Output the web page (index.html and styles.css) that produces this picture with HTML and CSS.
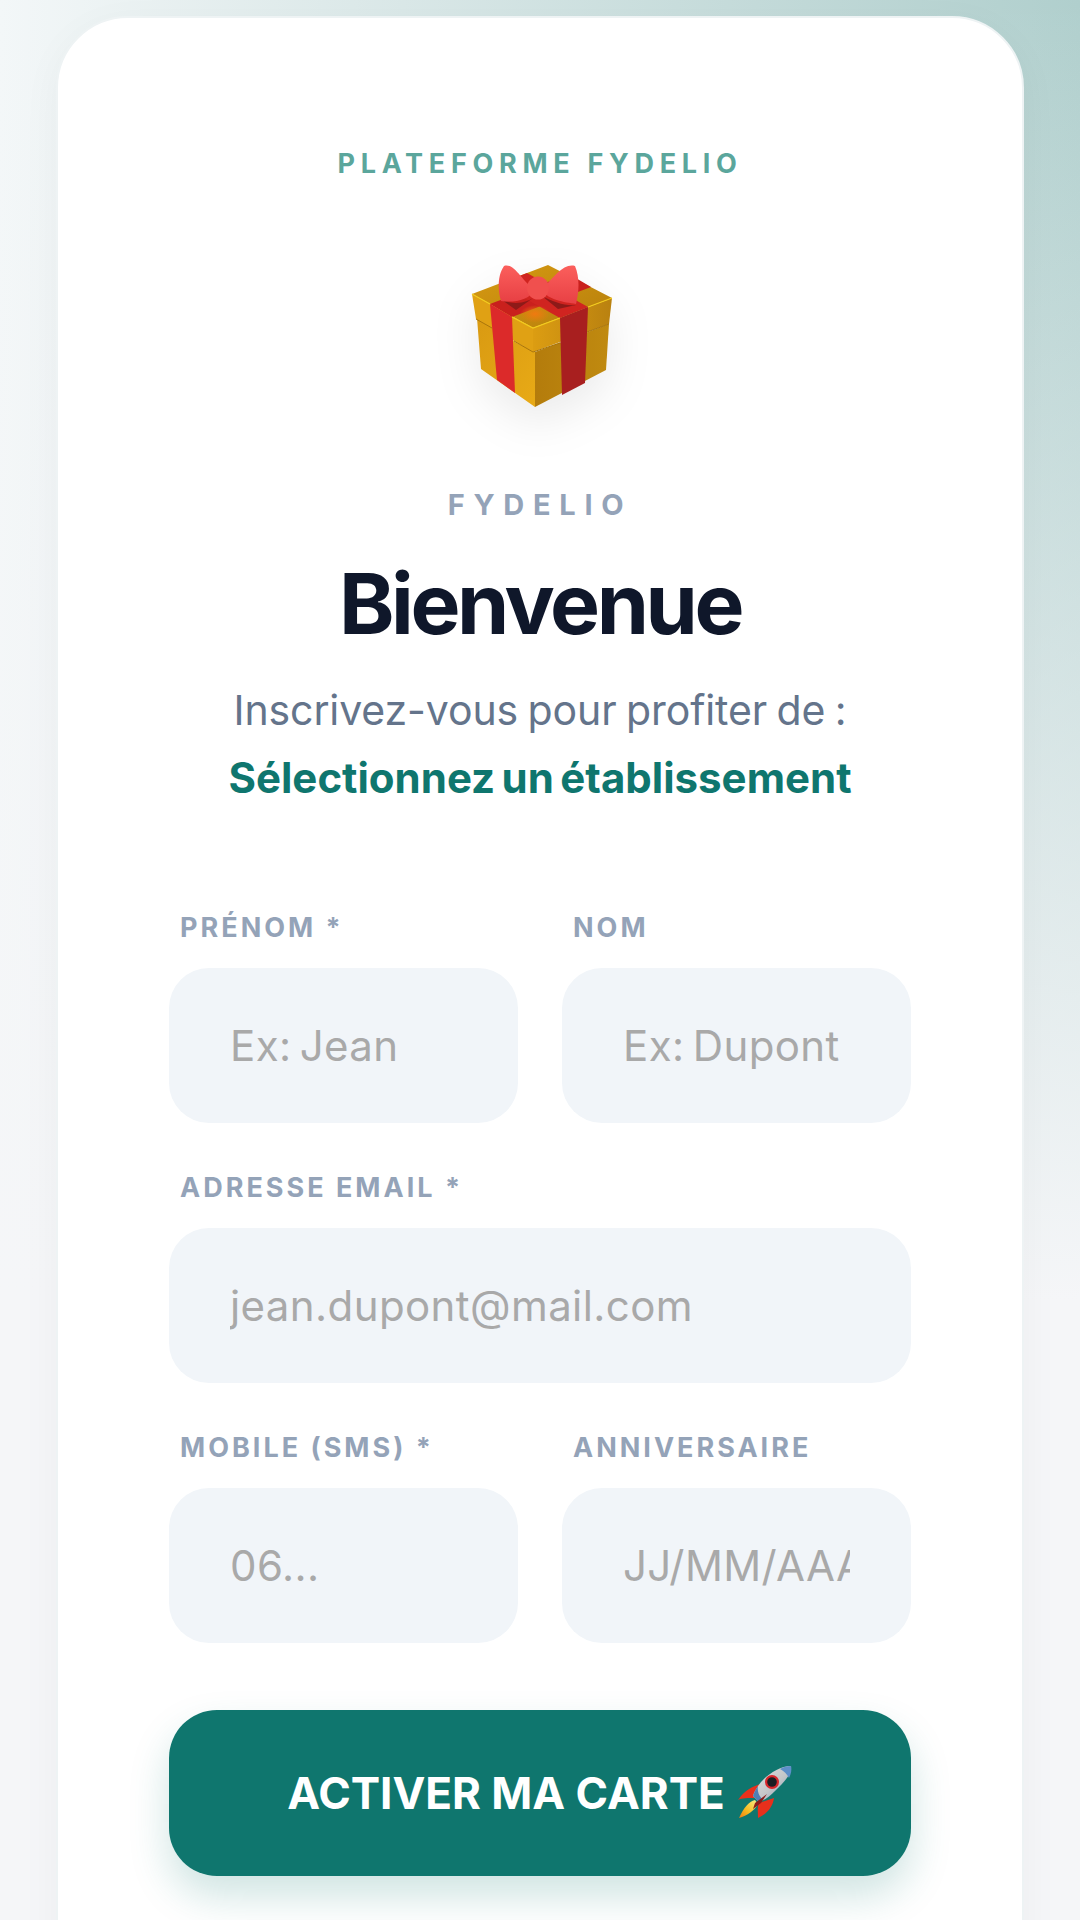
FILE: index.html
```html
<!DOCTYPE html>
<html lang="fr">
<head>
    <meta charset="UTF-8">
    <meta name="viewport" content="width=device-width, initial-scale=1.0">
    <title>Fydelio - Bienvenue</title>
    <link rel="stylesheet" href="styles.css">
</head>
<body>
    <div class="card">
        <p class="platform">PLATEFORME FYDELIO</p>
        <div class="giftWrap">
            <svg class="gift" viewBox="0 0 200 200" width="200" height="200" aria-hidden="true">
                <defs>
                    <linearGradient id="goldLeft" x1="0" y1="0" x2="1" y2="1">
                        <stop offset="0" stop-color="#d99a12"/>
                        <stop offset="1" stop-color="#e8aa16"/>
                    </linearGradient>
                    <linearGradient id="goldRight" x1="0" y1="0" x2="1" y2="0">
                        <stop offset="0" stop-color="#b47c0c"/>
                        <stop offset="1" stop-color="#c08a10"/>
                    </linearGradient>
                    <linearGradient id="lidRight" x1="0" y1="0" x2="1" y2="0">
                        <stop offset="0" stop-color="#dc9d12"/>
                        <stop offset="1" stop-color="#b98110"/>
                    </linearGradient>
                    <linearGradient id="lidTop" x1="0" y1="0" x2="1" y2="1">
                        <stop offset="0" stop-color="#d79a12"/>
                        <stop offset="1" stop-color="#b67f0c"/>
                    </linearGradient>
                    <radialGradient id="glow" cx="0.5" cy="0.5" r="0.5">
                        <stop offset="0" stop-color="#f07a10"/>
                        <stop offset="1" stop-color="#f07a10" stop-opacity="0"/>
                    </radialGradient>
                    <linearGradient id="bowFill" x1="0" y1="0" x2="0" y2="1">
                        <stop offset="0" stop-color="#fb5f5c"/>
                        <stop offset="1" stop-color="#e84044"/>
                    </linearGradient>
                </defs>
                <!-- box body -->
                <path d="M37 78 L75 102 L95 112 L95 167 L41 129 Z" fill="url(#goldLeft)"/>
                <path d="M95 112 L169 84 L166 130 L95 167 Z" fill="url(#goldRight)"/>
                <!-- lid -->
                <path d="M32 54 L108 25 L172 58 L93 88 Z" fill="url(#lidTop)"/>
                <path d="M32 54 L93 88 L93 112 L36 79 Z" fill="#e0a114"/>
                <path d="M93 88 L172 58 L169 84 L93 112 Z" fill="url(#lidRight)"/>
                <!-- ribbon -->
                <path d="M50 64 L72 77 L151 47 L129 34 Z" fill="#c9201d"/>
                <path d="M120 78 L148 67 L87 33 L59 44 Z" fill="#d02420"/>
                <path d="M50 64 L72 77 L75 153 L57 140 Z" fill="#dc2a2a"/>
                <path d="M120 78 L148 67 L145 143 L122 155 Z" fill="#a81f1f"/>
                <ellipse cx="95" cy="74" rx="15" ry="9" fill="url(#glow)"/>
                <path d="M32 54 L50 64 M72 77 L93 88 L120 78 M148 67 L172 58" fill="none" stroke="#f3cc1c" stroke-width="1.2"/>
                <path d="M36 79 L52 88 M74 101 L93 112 L120 103 M147 92 L169 84" fill="none" stroke="#a9750c" stroke-width="1"/>
                <!-- bow -->
                <path d="M62 60 C76 66 88 62 96 56 L76 70 Z M102 56 C114 62 124 66 136 65 L118 69 Z" fill="#8e1a18"/>
                <path d="M94 50 C80 38 74 23 64 26 C57 36 58 52 61 61 C74 63 90 60 94 50 Z" fill="url(#bowFill)"/>
                <path d="M102 50 C114 36 124 23 135 26 C140 38 139 52 136 64 C124 62 108 60 102 50 Z" fill="url(#bowFill)"/>
                <ellipse cx="98" cy="48" rx="11" ry="11.5" fill="#f0504e"/>
            </svg>
        </div>
        <p class="brand">FYDELIO</p>
        <h1>Bienvenue</h1>
        <p class="intro">Inscrivez-vous pour profiter de :</p>
        <p class="venue">Sélectionnez un établissement</p>

        <form class="form">
            <div class="field">
                <label for="prenom">PRÉNOM *</label>
                <input type="text" id="prenom" placeholder="Ex: Jean">
            </div>
            <div class="field">
                <label for="nom">NOM</label>
                <input type="text" id="nom" placeholder="Ex: Dupont">
            </div>
            <div class="field wide">
                <label for="email">ADRESSE EMAIL *</label>
                <input type="text" id="email" placeholder="jean.dupont@mail.com">
            </div>
            <div class="field">
                <label for="mobile">MOBILE (SMS) *</label>
                <input type="text" id="mobile" placeholder="06...">
            </div>
            <div class="field">
                <label for="birthday">ANNIVERSAIRE</label>
                <input type="text" id="birthday" placeholder="JJ/MM/AAAA">
            </div>
            <button type="button" class="submit">
                <span>ACTIVER MA CARTE</span>
                <svg class="rocket" viewBox="0 0 56 56" width="56" height="56" aria-hidden="true">
                    <defs>
                        <linearGradient id="hull" x1="0" y1="0" x2="1" y2="1">
                            <stop offset="0" stop-color="#e2e2e2"/>
                            <stop offset="0.55" stop-color="#c4c6c8"/>
                            <stop offset="1" stop-color="#6f8fb8"/>
                        </linearGradient>
                        <linearGradient id="flame" x1="1" y1="0" x2="0" y2="1">
                            <stop offset="0" stop-color="#f6f08a"/>
                            <stop offset="0.6" stop-color="#f6b81c"/>
                            <stop offset="1" stop-color="#ee7a12"/>
                        </linearGradient>
                    </defs>
                    <path d="M24 19 C16 21 8 25 1 35 C5 33 12 33 17 33 Z" fill="#e8301c"/>
                    <path d="M37 33 C36 40 32 48 21 53 C21 47 20 42 22 38 Z" fill="#e8301c"/>
                    <path d="M18 35 C12 36 6 44 2 53 C10 51 18 45 21 39 Z" fill="url(#flame)"/>
                    <path d="M54 1 C44 1 32 8 24 17 C20 22 17 27 16 31 L22 37 C28 35 33 31 38 26 C48 16 55 9 54 1 Z" fill="url(#hull)"/>
                    <path d="M54 1 C50 1 46 2 43 4 C47 6 50 9 52 13 C54 9 55 5 54 1 Z" fill="#5d8fc9"/>
                    <path d="M16 31 C17 27 19 24 21 21 C20 26 22 31 26 35 L22 37 Z" fill="#4f7fb5"/>
                    <circle cx="35" cy="17" r="7" fill="#d8262a"/>
                    <circle cx="35" cy="17" r="4.8" fill="#1c1d22"/>
                    <path d="M18 38 L30 29 L24 38 L16 44 Z" fill="#8c1c1a"/>
                </svg>
            </button>
        </form>
    </div>
</body>
</html>
```

FILE: styles.css
```css
html, body {
    margin: 0;
    padding: 0;
    height: 1920px;
    overflow: hidden;
}
body {
    background: linear-gradient(180deg, rgba(245, 247, 249, 0) 0, #f5f6f8 1300px),
        linear-gradient(90deg, #f3f7f8 0, #b0cfcd 100%);
    font-family: 'Inter', 'Liberation Sans', sans-serif;
}
.card {
    box-sizing: border-box;
    margin: 16px 56px 0 56px;
    height: 2000px;
    padding: 130px 111px 0 111px;
    background-color: #fff;
    border: 2px solid #eef3f4;
    border-radius: 72px;
    box-shadow: 0 10px 40px rgba(15, 60, 60, 0.04);
    text-align: center;
}
p {
    margin: 0;
}
.platform {
    font-size: 27px;
    line-height: 32px;
    font-weight: 700;
    letter-spacing: 5.7px;
    color: #5ba69c;
}
.giftWrap {
    display: flex;
    justify-content: center;
    height: 200px;
    margin-top: 60px;
}
.gift {
    filter: drop-shadow(0 18px 22px rgba(0, 0, 0, 0.08));
}
.brand {
    margin-top: 48px;
    font-size: 29px;
    line-height: 34px;
    font-weight: 700;
    letter-spacing: 8.7px;
    color: #94a3b8;
}
h1 {
    margin: 36px 0 0 0;
    font-size: 84px;
    line-height: 92px;
    font-weight: 700;
    letter-spacing: -3.4px;
    color: #0f172a;
}
.intro {
    margin-top: 32px;
    font-size: 41px;
    line-height: 56px;
    font-weight: 400;
    letter-spacing: -0.1px;
    word-spacing: -2px;
    color: #64748b;
}
.venue {
    margin-top: 13px;
    font-size: 42px;
    line-height: 54px;
    font-weight: 700;
    letter-spacing: 0;
    word-spacing: -3.5px;
    color: #0f766e;
}
.form {
    display: grid;
    grid-template-columns: 349px 349px;
    column-gap: 44px;
    row-gap: 49px;
    margin-top: 107px;
}
.field {
    display: flex;
    flex-direction: column;
    min-width: 0;
    text-align: left;
}
.wide {
    grid-column: span 2;
}
label {
    padding-left: 11px;
    margin-bottom: 24px;
    font-size: 27px;
    line-height: 32px;
    font-weight: 700;
    letter-spacing: 3px;
    color: #94a3b8;
}
input {
    box-sizing: border-box;
    width: 100%;
    height: 155px;
    padding: 0 61px;
    background-color: #f1f5f9;
    border: none;
    border-radius: 40px;
    font-family: 'Inter', 'Liberation Sans', sans-serif;
    font-size: 42px;
    letter-spacing: 0.4px;
    word-spacing: -4px;
    color: #334155;
    outline: none;
}
input::placeholder {
    color: #a9a9a9;
    opacity: 1;
}
.submit {
    grid-column: span 2;
    display: flex;
    justify-content: center;
    align-items: center;
    gap: 12px;
    height: 166px;
    margin-top: 18px;
    padding: 0;
    background-color: #0f766e;
    border: none;
    border-radius: 48px;
    box-shadow: 0 20px 40px rgba(15, 118, 110, 0.2);
    font-family: 'Inter', 'Liberation Sans', sans-serif;
    font-size: 44px;
    font-weight: 700;
    color: #fff;
}
```
